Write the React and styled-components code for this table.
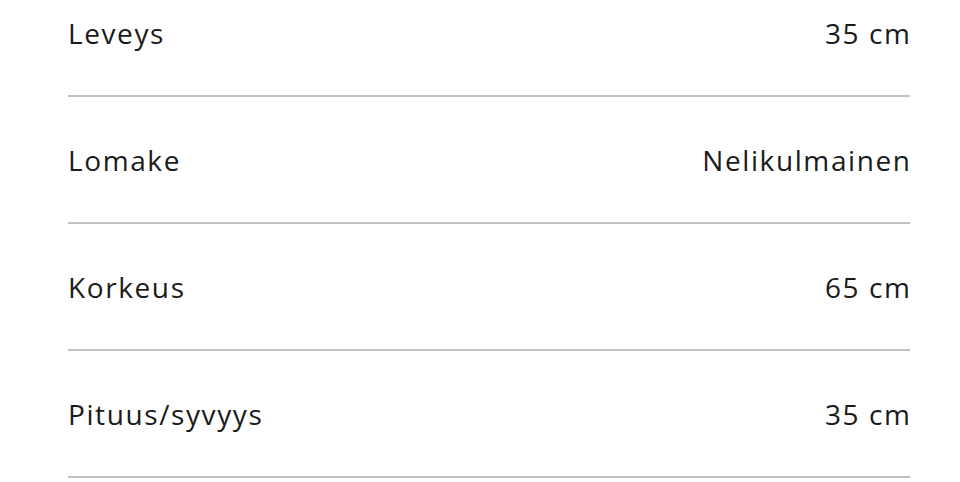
import React from 'react';
import styled, { createGlobalStyle } from 'styled-components';

const Global = createGlobalStyle`
    html, body {
        margin : 0;
        padding : 0;
        background : #ffffff;
        overflow : hidden;
    }
`;

const Page = styled.div`
    width : 960px;
    height : 482px;
    overflow : hidden;
    box-sizing : border-box;
    padding : 0 50px 0 68px;
    font-family : "Open Sans", Lato, sans-serif;
    color : #1b1b1b;
`;

const List = styled.dl`
    margin : -30px 0 0 0;
    padding : 0;
`;

const Row = styled.div`
    display : flex;
    justify-content : space-between;
    align-items : center;
    padding : 46px 0 45px;
    border-bottom : 2px solid #c2c2c2;
    font-size : 28px;
    line-height : 34px;
    letter-spacing : 1.6px;
`;

const Label = styled.dt`
    margin : 0;
`;

const Value = styled.dd`
    margin : 0 -1.6px 0 0;
    text-align : right;
`;

const specs = [
    { label: 'Leveys', value: '35 cm' },
    { label: 'Lomake', value: 'Nelikulmainen' },
    { label: 'Korkeus', value: '65 cm' },
    { label: 'Pituus/syvyys', value: '35 cm' },
];

function App() {
    return (
        <>
            <Global />
            <Page>
                <List>
                    {specs.map((s) => (
                        <Row key={s.label}>
                            <Label>{s.label}</Label>
                            <Value>{s.value}</Value>
                        </Row>
                    ))}
                </List>
            </Page>
        </>
    );
}

export default App;
